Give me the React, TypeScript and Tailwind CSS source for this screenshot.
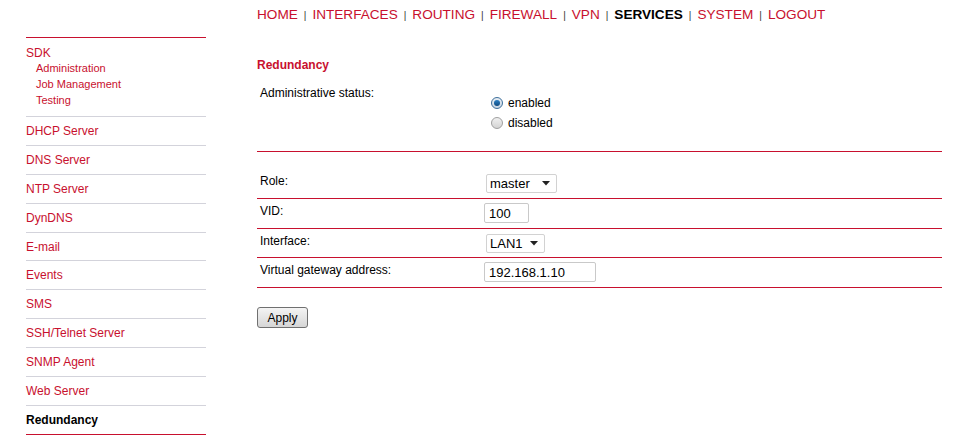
const RED = "text-[#c8102e]";

const navItems = [
  "HOME",
  "INTERFACES",
  "ROUTING",
  "FIREWALL",
  "VPN",
  "SERVICES",
  "SYSTEM",
  "LOGOUT",
];

const menu = [
  "DHCP Server",
  "DNS Server",
  "NTP Server",
  "DynDNS",
  "E-mail",
  "Events",
  "SMS",
  "SSH/Telnet Server",
  "SNMP Agent",
  "Web Server",
];

function Radio({ checked, label }: { checked?: boolean; label: string }) {
  return (
    <label className="flex h-[20px] items-center gap-[5px]">
      <span
        className={
          "flex h-[12px] w-[12px] items-center justify-center rounded-full border " +
          (checked
            ? "border-[#3d6f9b] bg-gradient-to-b from-[#e8eef4] to-[#c6d4e2]"
            : "border-[#a0a0a0] bg-gradient-to-b from-[#f0f0f0] to-[#d4d4d4]")
        }
      >
        {checked && (
          <span className="h-[6px] w-[6px] rounded-full bg-gradient-to-b from-[#2b80c4] to-[#0e4a80]" />
        )}
      </span>
      <span className="text-[12px] text-black">{label}</span>
    </label>
  );
}

function Select({ value, width }: { value: string; width: string }) {
  return (
    <div
      className={`${width} flex h-[19px] items-center justify-between rounded-[2px] border border-[#d2d2d2] bg-white pl-[3px] pr-[6px] text-[13px] text-black`}
    >
      <span>{value}</span>
      <svg width="8" height="5" viewBox="0 0 8 5">
        <path d="M0 0 L8 0 L4 4.5 Z" fill="#222" />
      </svg>
    </div>
  );
}

function TextInput({ value, width }: { value: string; width: string }) {
  return (
    <input
      readOnly
      value={value}
      className={`${width} h-[20px] rounded-[2px] border border-[#c9c9c9] bg-white px-[4px] text-[13px] text-black outline-none`}
    />
  );
}

function Row({
  label,
  height,
  pt,
  children,
}: {
  label: string;
  height: string;
  pt: string;
  children: React.ReactNode;
}) {
  return (
    <div className={`${height} flex border-b border-[#c8102e]`}>
      <div className="w-[227px] pl-[3px] pt-[5px] leading-[14px]">{label}</div>
      <div className={pt}>{children}</div>
    </div>
  );
}

export default function App() {
  return (
    <div
      className="flex h-[445px] w-[966px] bg-white text-[12px] text-black"
      style={{ fontFamily: '"Liberation Sans", Arial, sans-serif' }}
    >
      <aside className="ml-[26px] w-[180px] pt-[37px]">
        <div className="border-y border-t-[#c8102e] border-b-[#d3d3db] pb-[8px] pt-[8px]">
          <div className={`${RED} leading-[14px]`}>SDK</div>
          <div className="pl-[10px] text-[11px] leading-[16px]">
            <div className={RED}>Administration</div>
            <div className={RED}>Job Management</div>
            <div className={RED}>Testing</div>
          </div>
        </div>
        {menu.map((m) => (
          <div
            key={m}
            className={`${RED} flex h-[28.9px] items-center border-b border-[#d3d3db]`}
          >
            {m}
          </div>
        ))}
        <div className="flex h-[28.9px] items-center border-b border-[#c8102e] font-bold">
          Redundancy
        </div>
      </aside>

      <main className="ml-[51px] w-[685px]">
        <nav className="flex items-baseline pt-[7px] text-[13.6px] leading-[16px]">
          {navItems.map((n, i) => (
            <div key={n} className="flex items-baseline">
              {i > 0 && (
                <span className="mx-[6px] text-[10px] text-[#333]">|</span>
              )}
              <span
                className={
                  n === "SERVICES" ? "font-bold text-black" : "text-[#c8102e]"
                }
              >
                {n}
              </span>
            </div>
          ))}
        </nav>

        <h2 className={`${RED} mt-[34px] font-bold leading-[14px]`}>
          Redundancy
        </h2>

        <div className="mt-[14px] flex h-[66px] border-b border-[#c8102e]">
          <div className="w-[234px] pl-[3px] leading-[14px]">
            Administrative status:
          </div>
          <div className="pt-[7px]">
            <Radio checked label="enabled" />
            <Radio label="disabled" />
          </div>
        </div>

        <div className="mt-[17px]">
          <Row label="Role:" height="h-[30px]" pt="pl-[2px] pt-[5px]">
            <Select value="master" width="w-[71px]" />
          </Row>
          <Row label="VID:" height="h-[30px]" pt="pt-[4px]">
            <TextInput value="100" width="w-[45px]" />
          </Row>
          <Row label="Interface:" height="h-[29px]" pt="pl-[2px] pt-[5px]">
            <Select value="LAN1" width="w-[59px]" />
          </Row>
          <Row label="Virtual gateway address:" height="h-[30px]" pt="pt-[4px]">
            <TextInput value="192.168.1.10" width="w-[112px]" />
          </Row>
        </div>

        <button className="mt-[19px] h-[21px] w-[51px] rounded-[3px] border border-[#707070] bg-gradient-to-b from-[#f4f4f4] to-[#d6d6d6] text-[12px] text-black">
          Apply
        </button>
      </main>
    </div>
  );
}
